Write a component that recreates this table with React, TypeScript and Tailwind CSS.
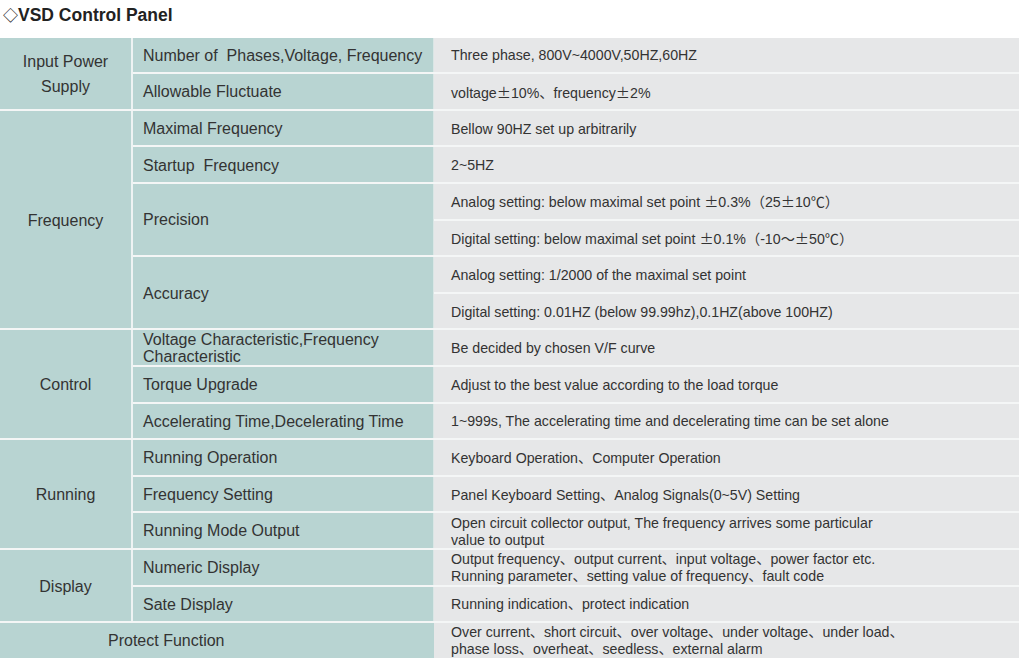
import React from "react";

const PM = () => <span className="font-['Noto_Sans_CJK_SC']">±</span>;

const teal = "bg-[#b8d4d2]";

function G({ pos, children }: { pos: string; children: React.ReactNode }) {
  return (
    <div
      className={`${pos} col-start-1 ${teal} border-r-2 border-[#eef3f3] flex items-center justify-center text-center text-[16px] leading-[25px] pt-[1px]`}
    >
      <div>{children}</div>
    </div>
  );
}

function L({ pos, children }: { pos: string; children: React.ReactNode }) {
  return (
    <div
      className={`${pos} col-start-2 ${teal} border-r border-[#d9e6e5] flex items-center pl-[10px] text-[16px] leading-[16.5px] whitespace-pre pt-[2px]`}
    >
      <div>{children}</div>
    </div>
  );
}

function V({ pos, children }: { pos: string; children: React.ReactNode }) {
  return (
    <div className={`${pos} col-start-3 bg-[#e6e7e8] flex items-center pl-[17px] text-[14.2px] leading-[17px] pt-[2px]`}>
      <div>{children}</div>
    </div>
  );
}

export default function App() {
  return (
    <div className="w-[1019px] h-[658px] overflow-hidden bg-white text-[#333333] font-['Liberation_Sans','Noto_Sans_CJK_SC',sans-serif]">
      <div className="h-[37.7px] pl-[3px] pt-[4px] text-[17.5px] font-bold text-[#222] leading-[22px] flex items-baseline">
        <span className="text-[15px] font-normal">◇</span>
        <span>VSD Control Panel</span>
      </div>
      <div className="grid grid-cols-[133px_301px_1fr] grid-rows-[repeat(17,34.6px)] gap-y-[2px] bg-[#f4f6f6]">
        <G pos="row-[1/span_2]">
          Input Power
          <br />
          Supply
        </G>
        <L pos="row-[1/span_1]">Number of  Phases,Voltage, Frequency</L>
        <V pos="row-[1/span_1]">Three phase, 800V~4000V,50HZ,60HZ</V>
        <L pos="row-[2/span_1]">Allowable Fluctuate</L>
        <V pos="row-[2/span_1]">
          voltage<PM />10%、frequency<PM />2%
        </V>

        <G pos="row-[3/span_6]">Frequency</G>
        <L pos="row-[3/span_1]">Maximal Frequency</L>
        <V pos="row-[3/span_1]">Bellow 90HZ set up arbitrarily</V>
        <L pos="row-[4/span_1]">Startup  Frequency</L>
        <V pos="row-[4/span_1]">2~5HZ</V>
        <L pos="row-[5/span_2]">Precision</L>
        <V pos="row-[5/span_1]">
          Analog setting: below maximal set point <PM />0.3%（25<PM />10℃）
        </V>
        <V pos="row-[6/span_1]">
          Digital setting: below maximal set point <PM />0.1%（-10～<PM />50℃）
        </V>
        <L pos="row-[7/span_2]">Accuracy</L>
        <V pos="row-[7/span_1]">Analog setting: 1/2000 of the maximal set point</V>
        <V pos="row-[8/span_1]">Digital setting: 0.01HZ (below 99.99hz),0.1HZ(above 100HZ)</V>

        <G pos="row-[9/span_3]">Control</G>
        <L pos="row-[9/span_1]">
          Voltage Characteristic,Frequency
          <br />
          Characteristic
        </L>
        <V pos="row-[9/span_1]">Be decided by chosen V/F curve</V>
        <L pos="row-[10/span_1]">Torque Upgrade</L>
        <V pos="row-[10/span_1]">Adjust to the best value according to the load torque</V>
        <L pos="row-[11/span_1]">Accelerating Time,Decelerating Time</L>
        <V pos="row-[11/span_1]">1~999s, The accelerating time and decelerating time can be set alone</V>

        <G pos="row-[12/span_3]">Running</G>
        <L pos="row-[12/span_1]">Running Operation</L>
        <V pos="row-[12/span_1]">Keyboard Operation、Computer Operation</V>
        <L pos="row-[13/span_1]">Frequency Setting</L>
        <V pos="row-[13/span_1]">Panel Keyboard Setting、Analog Signals(0~5V) Setting</V>
        <L pos="row-[14/span_1]">Running Mode Output</L>
        <V pos="row-[14/span_1]">
          Open circuit collector output, The frequency arrives some particular
          <br />
          value to output
        </V>

        <G pos="row-[15/span_2]">Display</G>
        <L pos="row-[15/span_1]">Numeric Display</L>
        <V pos="row-[15/span_1]">
          Output frequency、output current、input voltage、power factor etc.
          <br />
          Running parameter、setting value of frequency、fault code
        </V>
        <L pos="row-[16/span_1]">Sate Display</L>
        <V pos="row-[16/span_1]">Running indication、protect indication</V>

        <div className={`row-[17/span_1] col-[1/span_2] ${teal} flex items-center pl-[108px] text-[16px] pt-[1px]`}>
          Protect Function
        </div>
        <V pos="row-[17/span_1]">
          Over current、short circuit、over voltage、under voltage、under load、
          <br />
          phase loss、overheat、seedless、external alarm
        </V>
      </div>
    </div>
  );
}
